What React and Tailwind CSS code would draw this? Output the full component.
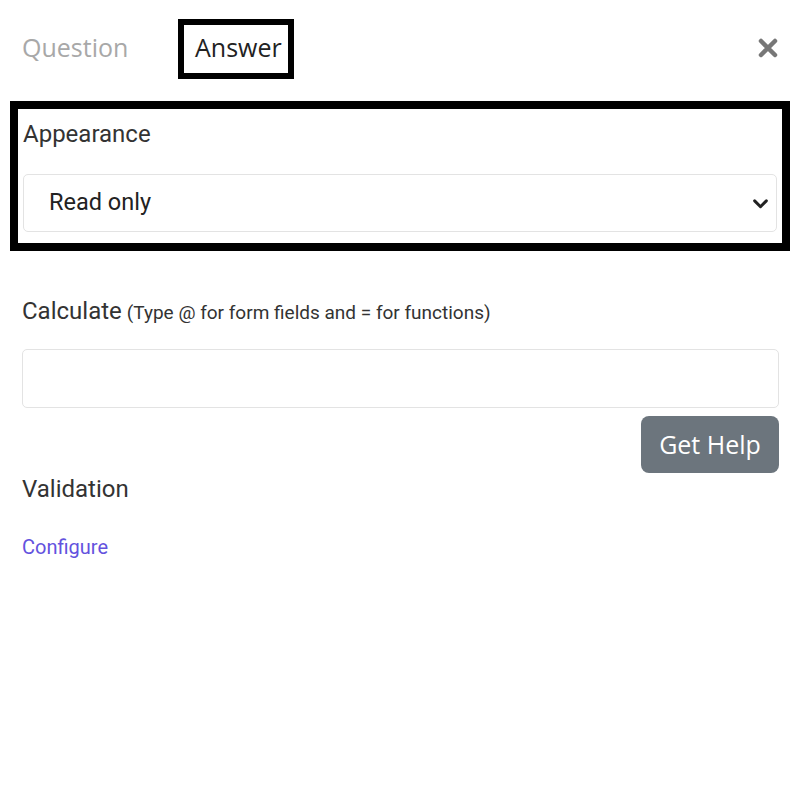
import React from "react";

export default function App() {
  const roboto = { fontFamily: "Roboto, 'Liberation Sans', sans-serif" };
  const open = { fontFamily: "'Open Sans', sans-serif" };
  return (
    <div className="w-[800px] h-[795px] bg-white" style={roboto}>
      <div className="flex items-center h-[60px] mt-[19px] pl-[22px] pr-[22px]">
        <div className="text-[25px] text-[#a8a8a8] w-[156px] leading-[30px] mb-[4px]" style={open}>Question</div>
        <div className="border-[6px] border-black h-[60px] w-[116px] flex items-center pl-[11px] pb-[4px] text-[25px] text-[#222] leading-[30px]" style={open}>Answer</div>
        <div className="ml-auto flex items-center mb-[2px]">
          <svg width="20" height="20" viewBox="0 0 20 20">
            <path d="M3 3 L17 17 M17 3 L3 17" stroke="#777" strokeWidth="4.5" strokeLinecap="round" />
          </svg>
        </div>
      </div>
      <div className="mx-[10px] mt-[22px] border-[8px] border-black px-[5px] pt-[11px] pb-[11px]">
        <div className="text-[24px] text-[#333] leading-[28px]">Appearance</div>
        <div className="mt-[26px] h-[58px] border border-[#e3e3e3] rounded-[5px] flex items-center pl-[25px] pr-[7px]">
          <span className="text-[23.5px] text-[#222]">Read only</span>
          <svg className="ml-auto" width="17" height="17" viewBox="0 0 16 16">
            <path d="M2.5 5.5 L8 11 L13.5 5.5" fill="none" stroke="#222" strokeWidth="2.8" strokeLinecap="round" strokeLinejoin="round" />
          </svg>
        </div>
      </div>
      <div className="px-[22px] pr-[21px]">
        <div className="mt-[44px] flex items-baseline leading-[32px]">
          <span className="text-[24px] text-[#333]">Calculate</span>
          <span className="text-[19px] text-[#333] ml-[5px]">(Type @ for form fields and = for functions)</span>
        </div>
        <div className="mt-[20px] h-[59px] border border-[#e3e3e3] rounded-[5px]"></div>
        <div className="flex justify-end mt-[8px]">
          <div className="w-[138px] h-[57px] rounded-[8px] bg-[#6c757d] text-white text-[25px] flex items-center justify-center" style={open}>Get Help</div>
        </div>
        <div className="text-[24px] text-[#333] leading-[30px] mt-[1px]">Validation</div>
        <div className="mt-[31px] text-[20px] text-[#6352de] leading-[24px]">Configure</div>
      </div>
    </div>
  );
}
